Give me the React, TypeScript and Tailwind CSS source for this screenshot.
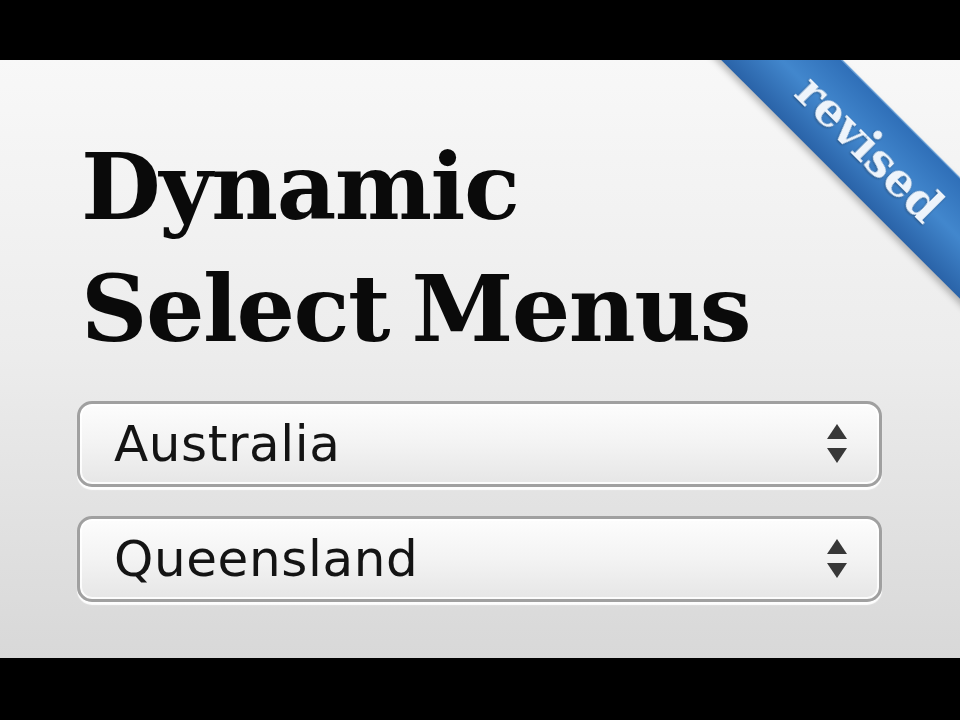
import React from "react";

function Arrows() {
  return (
    <svg width="28" height="42" viewBox="0 0 28 42" className="shrink-0">
      <path d="M14 1 L24 16 L4 16 Z" fill="#383838" />
      <path d="M4 25 L24 25 L14 40 Z" fill="#383838" />
    </svg>
  );
}

function SelectBox({ label }: { label: string }) {
  return (
    <div className="w-[805px] h-[86px] rounded-[15px] border-[3px] border-[#a0a0a0] bg-gradient-to-b from-[#fdfdfd] via-[#f3f3f3] to-[#e6e6e6] shadow-[0_3px_1px_rgba(255,255,255,0.95),inset_0_0_0_2px_rgba(255,255,255,0.85)] flex items-center justify-between pl-[34px] pr-[28px]">
      <span
        className="text-[50px] text-[#141414] leading-none tracking-[0.6px]"
        style={{ fontFamily: '"DejaVu Sans", "Noto Sans", sans-serif' }}
      >
        {label}
      </span>
      <Arrows />
    </div>
  );
}

export default function App() {
  return (
    <div className="w-[960px] h-[720px] bg-black flex flex-col">
      <div className="h-[60px] bg-black" />
      <div className="relative h-[598px] overflow-hidden bg-gradient-to-b from-[#f8f8f8] via-[#ececec] to-[#d8d8d8] pt-[66px] pl-[81px]">
        <h1
          className="text-[92px] leading-[122px] font-bold text-[#0a0a0a] tracking-[-1.5px] [word-spacing:-8px]"
          style={{ fontFamily: '"DejaVu Serif", "Liberation Serif", serif' }}
        >
          Dynamic
          <br />
          Select Menus
        </h1>
        <div className="mt-[31px] ml-[-4px] flex flex-col gap-[29px]">
          <SelectBox label="Australia" />
          <SelectBox label="Queensland" />
        </div>
        <div className="absolute left-[670px] top-[45px] w-[400px] h-[86px] rotate-45 bg-gradient-to-b from-[#2f6fb8] via-[#4287cd] to-[#2a63a8] border-t border-[#5b9ad8] shadow-[0_4px_6px_rgba(0,0,0,0.25)] flex items-center justify-center">
          <span
            className="text-[46px] font-bold text-[#eef4fb] leading-none drop-shadow-[0_1px_1px_rgba(0,0,0,0.35)]"
            style={{ fontFamily: '"DejaVu Serif", "Liberation Serif", serif' }}
          >
            revised
          </span>
        </div>
      </div>
      <div className="flex-1 bg-black" />
    </div>
  );
}
